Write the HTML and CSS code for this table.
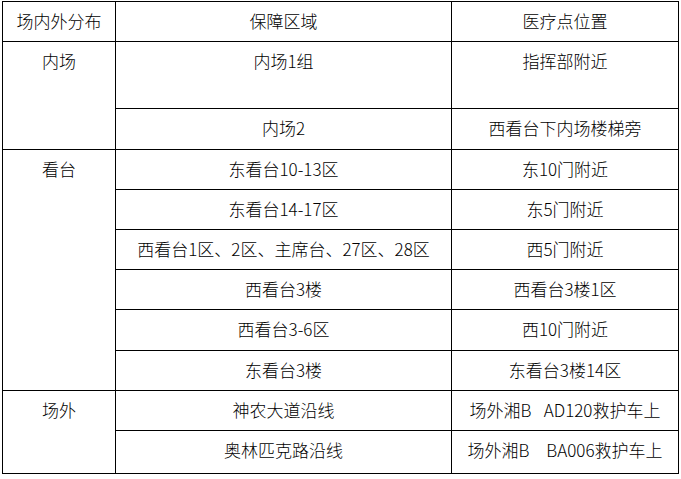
FILE: index.html
```html
<!DOCTYPE html>
<html lang="zh-CN">
<head>
<meta charset="utf-8">
<title>医疗点位置</title>
<link rel="stylesheet" href="styles.css">
</head>
<body>
<table class="grid">
  <colgroup>
    <col class="c1"><col class="c2"><col class="c3">
  </colgroup>
  <tr class="r40">
    <td>场内外分布</td>
    <td>保障区域</td>
    <td>医疗点位置</td>
  </tr>
  <tr class="r67">
    <td rowspan="2">内场</td>
    <td>内场1组</td>
    <td>指挥部附近</td>
  </tr>
  <tr class="r41">
    <td>内场2</td>
    <td>西看台下内场楼梯旁</td>
  </tr>
  <tr class="r40">
    <td rowspan="6">看台</td>
    <td>东看台10-13区</td>
    <td>东10门附近</td>
  </tr>
  <tr class="r40">
    <td>东看台14-17区</td>
    <td>东5门附近</td>
  </tr>
  <tr class="r40">
    <td>西看台1区、2区、主席台、27区、28区</td>
    <td>西5门附近</td>
  </tr>
  <tr class="r40">
    <td>西看台3楼</td>
    <td>西看台3楼1区</td>
  </tr>
  <tr class="r41">
    <td>西看台3-6区</td>
    <td>西10门附近</td>
  </tr>
  <tr class="r40">
    <td>东看台3楼</td>
    <td>东看台3楼14区</td>
  </tr>
  <tr class="r40">
    <td rowspan="2">场外</td>
    <td>神农大道沿线</td>
    <td class="pre">场外湘B&ensp; AD120救护车上</td>
  </tr>
  <tr class="r43">
    <td>奥林匹克路沿线</td>
    <td class="pre">场外湘B&ensp;&ensp;BA006救护车上</td>
  </tr>
</table>
</body>
</html>
```
FILE: styles.css
```css
html, body {
  margin: 0;
  padding: 0;
  background: #fff;
}
body {
  padding: 1px 0 0 2px;
  font-family: "Noto Sans CJK SC", sans-serif;
  font-size: 17px;
  font-weight: 300;
  color: #000;
}
.grid {
  border-collapse: collapse;
  table-layout: fixed;
  width: 676px;
}
.c1 { width: 113px; }
.c2 { width: 336px; }
.c3 { width: 227px; }
.grid td {
  border: 1px solid #000;
  padding: 8px 0 0 0;
  vertical-align: top;
  text-align: center;
  line-height: 22px;
  white-space: nowrap;
}
.grid .pre { white-space: pre; }
.r40 { height: 40px; }
.r41 { height: 41px; }
.r43 { height: 43px; }
.r67 { height: 67px; }
```
